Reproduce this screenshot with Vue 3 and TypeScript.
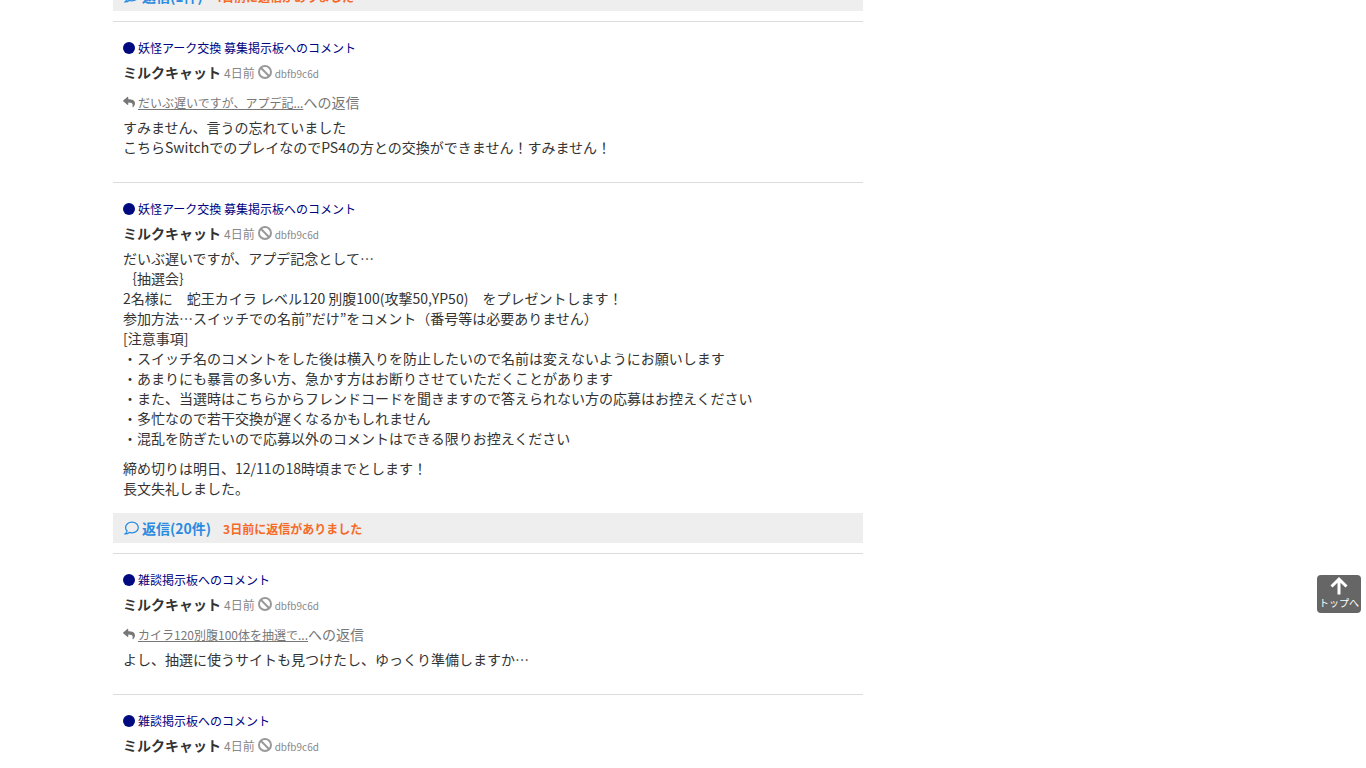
<script setup lang="ts">
interface Comment {
  id: number
  board: string
  replyTo?: string
  paragraphs: string[]
  replies?: { count: number; latest: string }
}

const comments: Comment[] = [
  { id: 1, board: '', paragraphs: [], replies: { count: 1, latest: '4日前' } },
  {
    id: 2,
    board: '妖怪アーク交換 募集掲示板',
    replyTo: 'だいぶ遅いですが、アプデ記...',
    paragraphs: [
      'すみません、言うの忘れていました\nこちらSwitchでのプレイなのでPS4の方との交換ができません！すみません！',
    ],
  },
  {
    id: 3,
    board: '妖怪アーク交換 募集掲示板',
    paragraphs: [
      'だいぶ遅いですが、アプデ記念として…\n｛抽選会｝\n2名様に　蛇王カイラ レベル120 別腹100(攻撃50,YP50)　をプレゼントします！\n参加方法…スイッチでの名前”だけ”をコメント（番号等は必要ありません）\n[注意事項]\n・スイッチ名のコメントをした後は横入りを防止したいので名前は変えないようにお願いします\n・あまりにも暴言の多い方、急かす方はお断りさせていただくことがあります\n・また、当選時はこちらからフレンドコードを聞きますので答えられない方の応募はお控えください\n・多忙なので若干交換が遅くなるかもしれません\n・混乱を防ぎたいので応募以外のコメントはできる限りお控えください',
      '締め切りは明日、12/11の18時頃までとします！\n長文失礼しました。',
    ],
    replies: { count: 20, latest: '3日前' },
  },
  {
    id: 4,
    board: '雑談掲示板',
    replyTo: 'カイラ120別腹100体を抽選で...',
    paragraphs: ['よし、抽選に使うサイトも見つけたし、ゆっくり準備しますか…'],
  },
  { id: 5, board: '雑談掲示板', paragraphs: [] },
]

const toTop = () => window.scrollTo({ top: 0, behavior: 'smooth' })
</script>

<template>
  <div class="page">
    <main class="feed">
      <article v-for="c in comments" :key="c.id" class="comment">
        <div v-if="c.board" class="content">
          <a class="board" href="#">
            <svg class="dot" viewBox="0 0 12 12" aria-hidden="true"><circle cx="6" cy="6" r="6" /></svg>
            <span>{{ c.board }}へのコメント</span>
          </a>
          <div class="meta">
            <strong class="name">ミルクキャット</strong>
            <span class="time">4日前</span>
            <button class="ban" type="button" aria-label="ブロック">
              <svg viewBox="0 0 14 14" aria-hidden="true">
                <circle cx="7" cy="7" r="6" />
                <path d="M2.8 2.8 11.2 11.2" />
              </svg>
            </button>
            <span class="uid">dbfb9c6d</span>
          </div>
          <div v-if="c.replyTo" class="reply-to">
            <svg class="arrow" viewBox="0 0 512 512" aria-hidden="true">
              <path d="M8.3 189.800 184.300 37.900C199.700 24.500 224 35.300 224 56v80.100c160.600 1.800 288 34 288 186.200 0 61.400-39.600 122.300-83.300 154.100-13.700 9.900-33.100-2.500-28.100-18.600C445.900 312.800 379.100 274.300 224 272v88c0 20.700-24.300 31.500-39.700 18.200l-176-152c-11.100-9.600-11.100-26.800 0-36.400z" />
            </svg>
            <a href="#">{{ c.replyTo }}</a>
            <span>への返信</span>
          </div>
          <div class="body">
            <p v-for="(text, i) in c.paragraphs" :key="i">{{ text }}</p>
          </div>
        </div>
        <div v-if="c.replies" class="replies">
          <a class="count" href="#">
            <svg class="bubble" viewBox="0 0 15 14" aria-hidden="true">
              <path d="M8 1.200C4.300 1.200 1.600 3.500 1.600 6.500c0 1.400.6 2.600 1.500 3.500-.2 1.100-1 2-1.900 2.800 1.600 0 3-.5 4.100-1.400.8.3 1.700.4 2.700.4 3.600 0 6.300-2.300 6.300-5.300S11.600 1.200 8 1.200z" />
            </svg>
            <span>返信({{ c.replies.count }}件)</span>
          </a>
          <span class="latest">{{ c.replies.latest }}に返信がありました</span>
        </div>
      </article>
    </main>
    <button class="to-top" type="button" @click="toTop">
      <svg viewBox="0 0 18 18" aria-hidden="true"><path d="M9 17.500V2.500M1.500 9.500 9 2.200l7.500 7.300" /></svg>
      <span>トップへ</span>
    </button>
  </div>
</template>

<style>
body {
  margin: 0;
  background: #fff;
}
</style>

<style scoped>
.page {
  box-sizing: border-box;
  height: 100vh;
  overflow: hidden;
  max-width: 1140px;
  margin: 0 auto;
  color: #333;
  font: 14px/20px "Noto Sans CJK JP", sans-serif;
}
.feed {
  max-width: 750px;
  margin-top: -20px;
}
.comment {
  border-top: 1px solid #ddd;
  padding-bottom: 10px;
}
.content {
  padding: 16px 10px 0;
}
.board,
.meta,
.reply-to,
.count {
  display: flex;
  align-items: baseline;
  gap: 3px;
}
.board {
  align-items: center;
  width: fit-content;
  color: #000080;
  font-size: 12px;
  text-decoration: none;
}
.dot {
  width: 12px;
  height: 12px;
  fill: #000a80;
}
.meta {
  margin: 4px 0 5px;
  color: #888;
}
.name {
  color: #333;
}
.time {
  font-size: 12px;
  line-height: 16px;
}
.ban {
  align-self: center;
  width: 14px;
  height: 14px;
  padding: 0;
  border: 0;
  background: none;
  cursor: pointer;
}
.ban svg {
  display: block;
  fill: none;
  stroke: #999;
  stroke-width: 2;
}
.uid {
  font-size: 10px;
  line-height: 14px;
}
.reply-to {
  margin: 10px 0 5px;
  color: #777;
}
.reply-to a {
  color: #777;
  font-size: 12px;
  line-height: 16px;
}
.reply-to span {
  margin-left: -3px;
}
.arrow {
  align-self: center;
  width: 12px;
  height: 12px;
  fill: #777;
}
.body {
  padding-bottom: 15px;
}
.body p {
  margin: 0;
  white-space: pre-wrap;
}
.body p + p {
  margin-top: 10px;
}
.replies {
  display: flex;
  align-items: baseline;
  gap: 12px;
  padding: 5px 11px;
  background: #eee;
  font-weight: bold;
}
.count {
  color: #2a8be0;
  text-decoration: none;
}
.bubble {
  align-self: center;
  width: 15px;
  height: 14px;
  fill: none;
  stroke: #2a8be0;
  stroke-width: 1.3;
}
.latest {
  color: #f56a28;
  font-size: 12px;
  line-height: 16px;
}
.to-top {
  position: fixed;
  right: 5px;
  bottom: 155px;
  display: flex;
  flex-direction: column;
  align-items: center;
  width: 44px;
  height: 38px;
  padding: 2px 0 0;
  border: 0;
  border-radius: 4px;
  background: #666;
  color: #fff;
  font: 10px/16px "Noto Sans CJK JP", sans-serif;
  cursor: pointer;
}
.to-top svg {
  width: 18px;
  height: 18px;
  flex: none;
  fill: none;
  stroke: #fff;
  stroke-width: 3;
}
</style>
